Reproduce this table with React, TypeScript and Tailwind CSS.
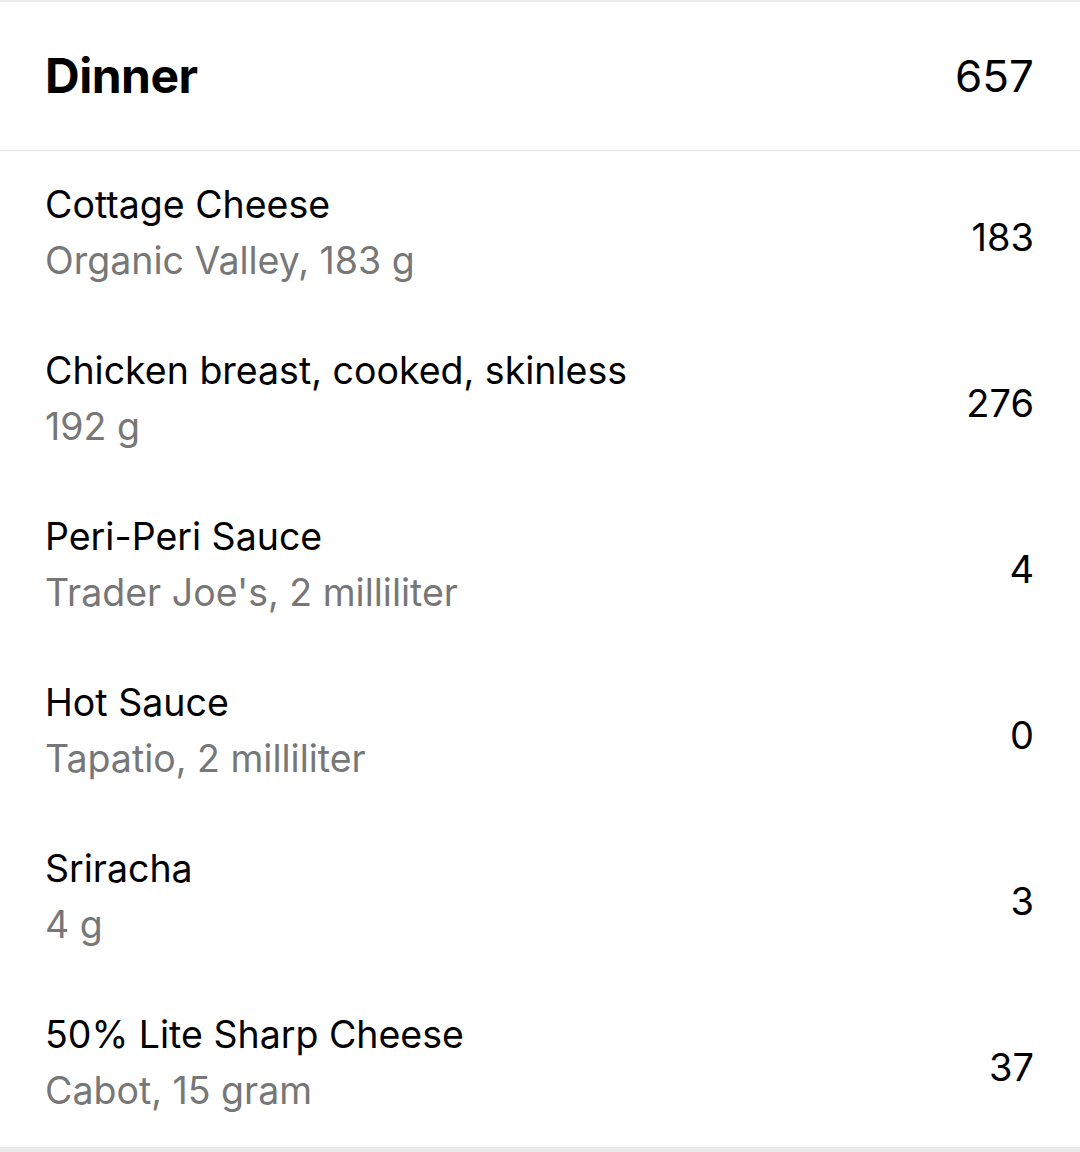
import React from 'react';

interface FoodItem {
  name: string;
  detail: string;
  calories: number;
}

const items: FoodItem[] = [
  { name: 'Cottage Cheese', detail: 'Organic Valley, 183 g', calories: 183 },
  { name: 'Chicken breast, cooked, skinless', detail: '192 g', calories: 276 },
  { name: 'Peri-Peri Sauce', detail: "Trader Joe's, 2 milliliter", calories: 4 },
  { name: 'Hot Sauce', detail: 'Tapatio, 2 milliliter', calories: 0 },
  { name: 'Sriracha', detail: '4 g', calories: 3 },
  { name: '50% Lite Sharp Cheese', detail: 'Cabot, 15 gram', calories: 37 },
];

export default function App() {
  return (
    <div className="w-[1080px] h-[1152px] bg-white overflow-hidden font-['Inter',sans-serif] text-black">
      <div className="h-[2px] bg-[#ebebeb]" />
      <div className="h-[149px] pl-[45px] pr-[46px] flex items-center justify-between border-b border-[#e2e2e2]">
        <h2 className="text-[48px] font-bold tracking-[-0.5px] leading-none">Dinner</h2>
        <span className="text-[44px] leading-none">657</span>
      </div>
      {items.map((item) => (
        <div key={item.name} className="h-[166px] pl-[45px] pr-[46px] flex items-center justify-between">
          <div className="flex flex-col -mt-[2px]">
            <p className="text-[37.5px] leading-[56px]">{item.name}</p>
            <p className="text-[37.5px] leading-[56px] text-[#777777]">{item.detail}</p>
          </div>
          <span className="text-[38px] leading-none mt-[6px]">{item.calories}</span>
        </div>
      ))}
      <div className="h-[6px] bg-[#ebebeb]" />
    </div>
  );
}
